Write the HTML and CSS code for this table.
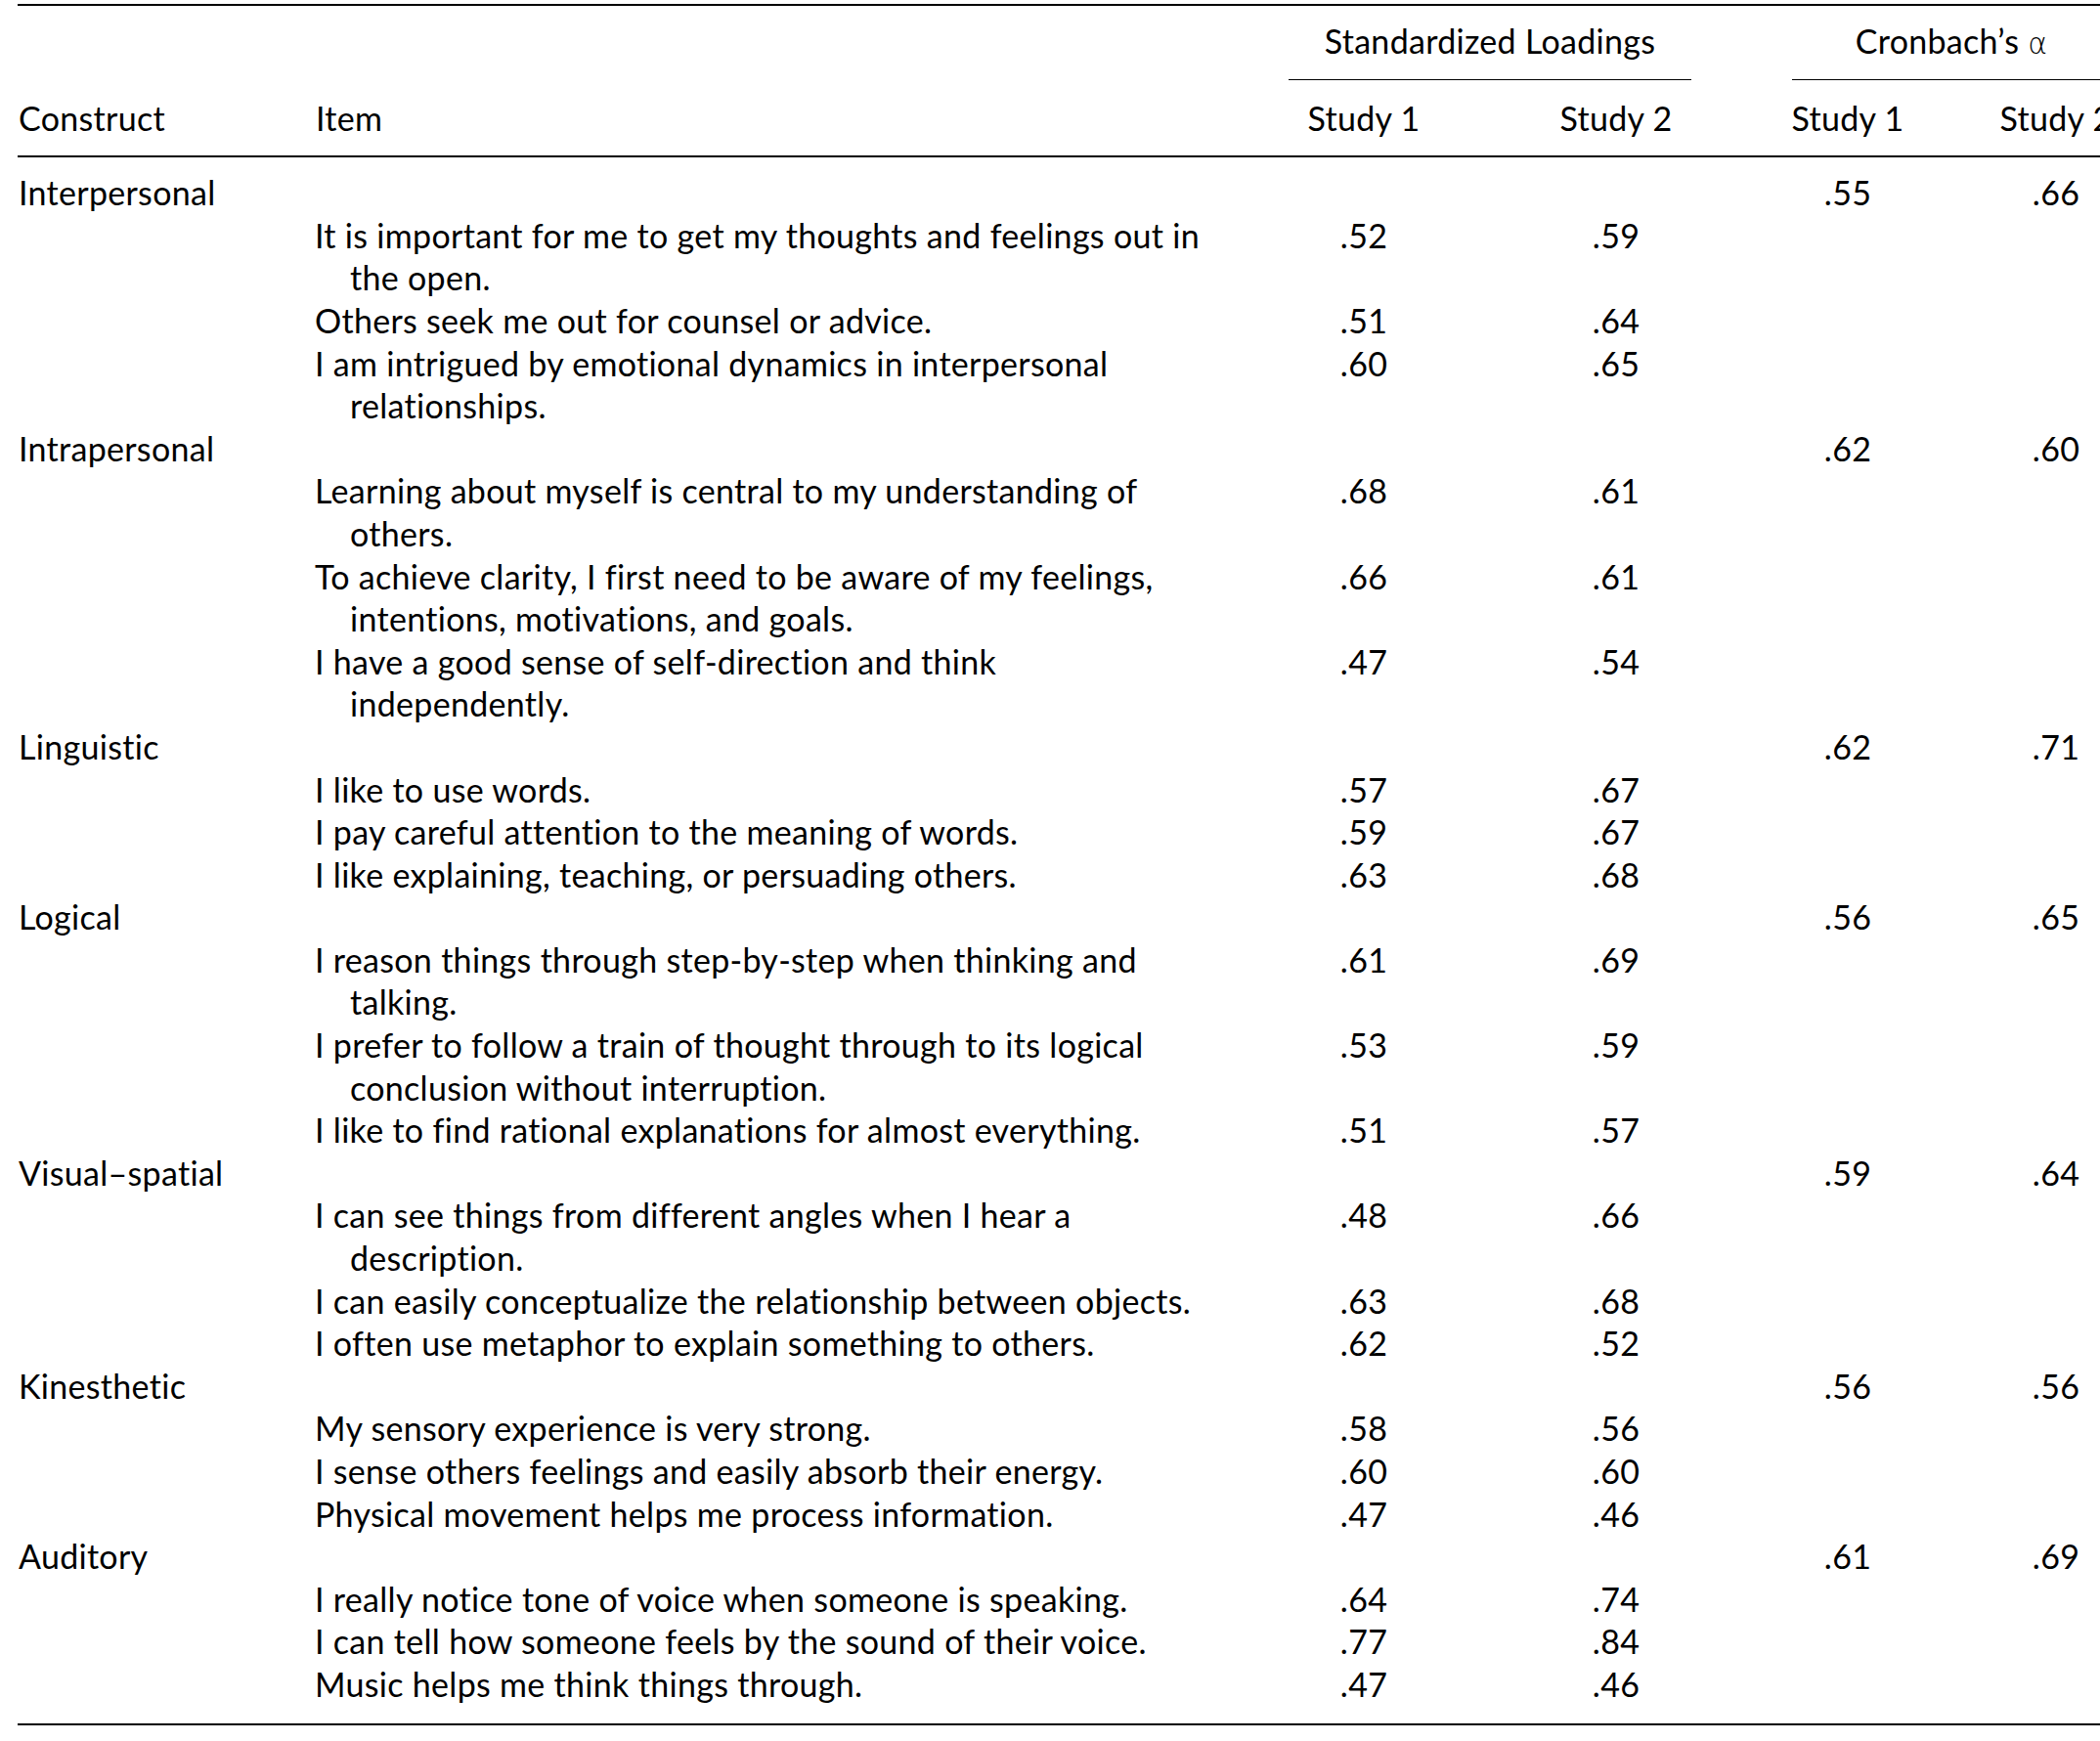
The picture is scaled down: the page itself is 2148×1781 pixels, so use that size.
FILE: index.html
```html
<!DOCTYPE html>
<html lang="en">
<head>
    <meta charset="UTF-8">
    <meta name="viewport" content="width=device-width, initial-scale=1.0">
    <title>Standardized Loadings and Cronbach's Alpha</title>
    <link rel="stylesheet" href="styles.css">
</head>
<body>
    <table class="loadings-table">
        <colgroup>
            <col class="col-construct">
            <col class="col-item">
            <col class="col-s1">
            <col class="col-s2">
            <col class="col-a1">
            <col class="col-a2">
        </colgroup>
        <thead>
            <tr class="head-group">
                <th></th>
                <th></th>
                <th colspan="2" class="group group-loadings"><span>Standardized Loadings</span></th>
                <th colspan="2" class="group group-alpha"><span>Cronbach’s <span class="alpha">α</span></span></th>
            </tr>
            <tr class="head-cols">
                <th class="left">Construct</th>
                <th class="left">Item</th>
                <th>Study 1</th>
                <th>Study 2</th>
                <th>Study 1</th>
                <th>Study 2</th>
            </tr>
        </thead>
        <tbody>
            <!-- Interpersonal -->
            <tr class="construct first">
                <td>Interpersonal</td><td></td><td></td><td></td><td class="num">.55</td><td class="num">.66</td>
            </tr>
            <tr>
                <td></td><td class="item">It is important for me to get my thoughts and feelings out in<br>the open.</td><td class="num">.52</td><td class="num">.59</td><td></td><td></td>
            </tr>
            <tr>
                <td></td><td class="item">Others seek me out for counsel or advice.</td><td class="num">.51</td><td class="num">.64</td><td></td><td></td>
            </tr>
            <tr>
                <td></td><td class="item">I am intrigued by emotional dynamics in interpersonal<br>relationships.</td><td class="num">.60</td><td class="num">.65</td><td></td><td></td>
            </tr>

            <!-- Intrapersonal -->
            <tr class="construct">
                <td>Intrapersonal</td><td></td><td></td><td></td><td class="num">.62</td><td class="num">.60</td>
            </tr>
            <tr>
                <td></td><td class="item">Learning about myself is central to my understanding of<br>others.</td><td class="num">.68</td><td class="num">.61</td><td></td><td></td>
            </tr>
            <tr>
                <td></td><td class="item">To achieve clarity, I first need to be aware of my feelings,<br>intentions, motivations, and goals.</td><td class="num">.66</td><td class="num">.61</td><td></td><td></td>
            </tr>
            <tr>
                <td></td><td class="item">I have a good sense of self-direction and think<br>independently.</td><td class="num">.47</td><td class="num">.54</td><td></td><td></td>
            </tr>

            <!-- Linguistic -->
            <tr class="construct">
                <td>Linguistic</td><td></td><td></td><td></td><td class="num">.62</td><td class="num">.71</td>
            </tr>
            <tr>
                <td></td><td class="item">I like to use words.</td><td class="num">.57</td><td class="num">.67</td><td></td><td></td>
            </tr>
            <tr>
                <td></td><td class="item">I pay careful attention to the meaning of words.</td><td class="num">.59</td><td class="num">.67</td><td></td><td></td>
            </tr>
            <tr>
                <td></td><td class="item">I like explaining, teaching, or persuading others.</td><td class="num">.63</td><td class="num">.68</td><td></td><td></td>
            </tr>

            <!-- Logical -->
            <tr class="construct">
                <td>Logical</td><td></td><td></td><td></td><td class="num">.56</td><td class="num">.65</td>
            </tr>
            <tr>
                <td></td><td class="item">I reason things through step-by-step when thinking and<br>talking.</td><td class="num">.61</td><td class="num">.69</td><td></td><td></td>
            </tr>
            <tr>
                <td></td><td class="item">I prefer to follow a train of thought through to its logical<br>conclusion without interruption.</td><td class="num">.53</td><td class="num">.59</td><td></td><td></td>
            </tr>
            <tr>
                <td></td><td class="item">I like to find rational explanations for almost everything.</td><td class="num">.51</td><td class="num">.57</td><td></td><td></td>
            </tr>

            <!-- Visual-spatial -->
            <tr class="construct">
                <td>Visual–spatial</td><td></td><td></td><td></td><td class="num">.59</td><td class="num">.64</td>
            </tr>
            <tr>
                <td></td><td class="item">I can see things from different angles when I hear a<br>description.</td><td class="num">.48</td><td class="num">.66</td><td></td><td></td>
            </tr>
            <tr>
                <td></td><td class="item">I can easily conceptualize the relationship between objects.</td><td class="num">.63</td><td class="num">.68</td><td></td><td></td>
            </tr>
            <tr>
                <td></td><td class="item">I often use metaphor to explain something to others.</td><td class="num">.62</td><td class="num">.52</td><td></td><td></td>
            </tr>

            <!-- Kinesthetic -->
            <tr class="construct">
                <td>Kinesthetic</td><td></td><td></td><td></td><td class="num">.56</td><td class="num">.56</td>
            </tr>
            <tr>
                <td></td><td class="item">My sensory experience is very strong.</td><td class="num">.58</td><td class="num">.56</td><td></td><td></td>
            </tr>
            <tr>
                <td></td><td class="item">I sense others feelings and easily absorb their energy.</td><td class="num">.60</td><td class="num">.60</td><td></td><td></td>
            </tr>
            <tr>
                <td></td><td class="item">Physical movement helps me process information.</td><td class="num">.47</td><td class="num">.46</td><td></td><td></td>
            </tr>

            <!-- Auditory -->
            <tr class="construct">
                <td>Auditory</td><td></td><td></td><td></td><td class="num">.61</td><td class="num">.69</td>
            </tr>
            <tr>
                <td></td><td class="item">I really notice tone of voice when someone is speaking.</td><td class="num">.64</td><td class="num">.74</td><td></td><td></td>
            </tr>
            <tr>
                <td></td><td class="item">I can tell how someone feels by the sound of their voice.</td><td class="num">.77</td><td class="num">.84</td><td></td><td></td>
            </tr>
            <tr class="last">
                <td></td><td class="item">Music helps me think things through.</td><td class="num">.47</td><td class="num">.46</td><td></td><td></td>
            </tr>
        </tbody>
    </table>
</body>
</html>
```

FILE: styles.css
```css
* {
    margin: 0;
    padding: 0;
    box-sizing: border-box;
}

html, body {
    background: #fff;
    overflow: hidden;
}

body {
    font-family: 'Lato', 'DejaVu Sans', sans-serif;
    font-size: 34px;
    letter-spacing: 0.3px;
    line-height: 43.6px;
    color: #000;
    padding: 4px 0 0 18px;
}

.loadings-table {
    table-layout: fixed;
    border-collapse: separate;
    border-spacing: 0;
    width: 2234px;
    border-top: 2px solid #000;
    border-bottom: 2px solid #000;
}

.col-construct { width: 304px; }
.col-item { width: 996px; }
.col-s1 { width: 154px; }
.col-s2 { width: 354px; }
.col-a1 { width: 128px; }
.col-a2 { width: 298px; }

th, td {
    vertical-align: top;
    white-space: nowrap;
    font-weight: normal;
    text-align: center;
}

th.left,
td:first-child,
td.item {
    text-align: left;
}

/* second study column sits a little right of its cell */
.head-cols th:nth-child(4),
tbody td:nth-child(4) {
    padding-left: 8px;
}

/* Header */
.head-group th {
    padding-top: 14px;
}

.group span {
    display: block;
}

.group > span {
    padding-bottom: 17px;
    border-bottom: 1px solid #000;
}

.group-loadings {
    padding-right: 96px;
}

.group-alpha {
    padding-left: 7px;
    padding-right: 93px;
}

.group .alpha {
    display: inline;
    font-family: 'DejaVu Sans', sans-serif;
    font-weight: 300;
    font-size: 30px;
    line-height: 0;
}

.head-cols th {
    padding-top: 17px;
    padding-bottom: 17px;
    border-bottom: 2px solid #000;
}

.head-cols th.left {
    padding-left: 1px;
}

/* Body */
tbody td:first-child {
    padding-left: 1px;
}

td.item {
    padding-left: 36px;
    text-indent: -36px;
}

tbody tr.first td {
    padding-top: 14px;
}

tbody tr.last td {
    padding-bottom: 18px;
}
```
